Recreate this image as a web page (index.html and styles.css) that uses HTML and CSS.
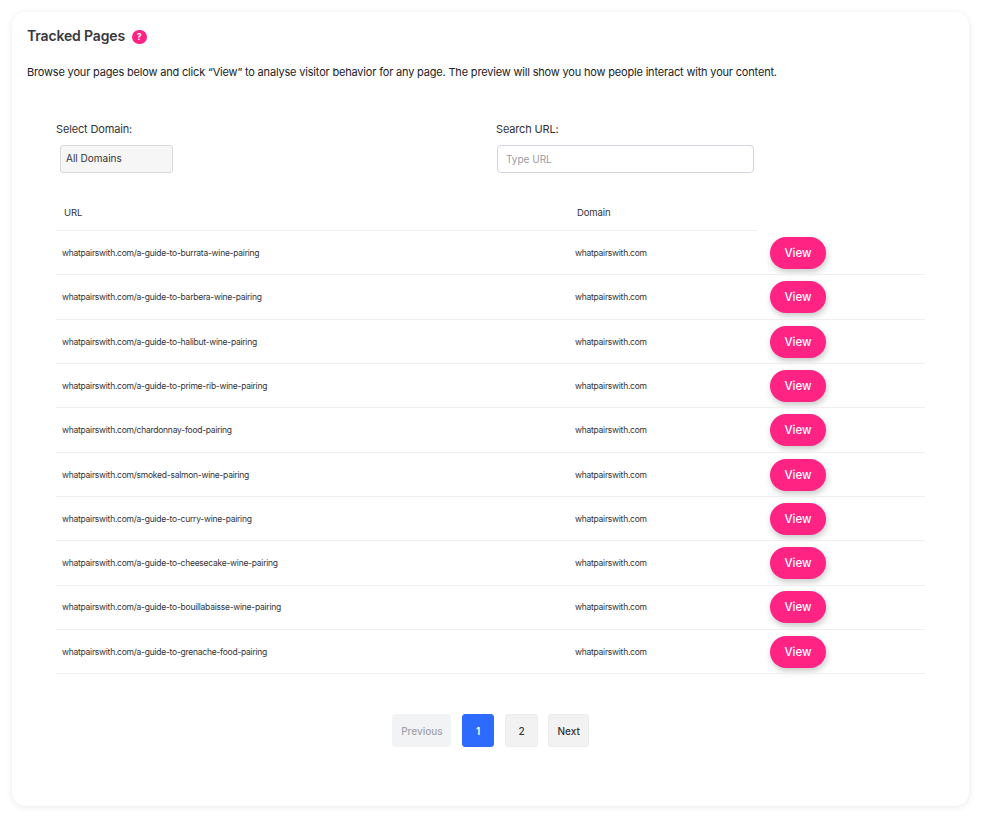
FILE: index.html
```html
<!DOCTYPE html>
<html lang="en">
<head>
<meta charset="utf-8">
<title>Tracked Pages</title>
<link rel="stylesheet" href="styles.css">
</head>
<body>
<main class="card">
  <div class="title-row">
    <h1 class="title">Tracked Pages</h1>
    <span class="help">?</span>
  </div>
  <p class="intro">Browse your pages below and click “View” to analyse visitor behavior for any page. The preview will show you how people interact with your content.</p>
  <section class="content">
    <div class="filters">
      <div class="filter filter-domain">
        <label class="label">Select Domain:</label>
        <div class="select">All Domains</div>
      </div>
      <div class="filter filter-search">
        <label class="label">Search URL:</label>
        <input class="search" type="text" placeholder="Type URL">
      </div>
    </div>
    <table class="pages">
      <thead>
        <tr><th class="col-url">URL</th><th class="col-domain">Domain</th><th class="col-action"></th></tr>
      </thead>
      <tbody>
        <tr><td class="col-url">whatpairswith.com/a-guide-to-burrata-wine-pairing</td><td class="col-domain">whatpairswith.com</td><td class="col-action"><button class="view">View</button></td></tr>
        <tr><td class="col-url">whatpairswith.com/a-guide-to-barbera-wine-pairing</td><td class="col-domain">whatpairswith.com</td><td class="col-action"><button class="view">View</button></td></tr>
        <tr><td class="col-url">whatpairswith.com/a-guide-to-halibut-wine-pairing</td><td class="col-domain">whatpairswith.com</td><td class="col-action"><button class="view">View</button></td></tr>
        <tr><td class="col-url">whatpairswith.com/a-guide-to-prime-rib-wine-pairing</td><td class="col-domain">whatpairswith.com</td><td class="col-action"><button class="view">View</button></td></tr>
        <tr><td class="col-url">whatpairswith.com/chardonnay-food-pairing</td><td class="col-domain">whatpairswith.com</td><td class="col-action"><button class="view">View</button></td></tr>
        <tr><td class="col-url">whatpairswith.com/smoked-salmon-wine-pairing</td><td class="col-domain">whatpairswith.com</td><td class="col-action"><button class="view">View</button></td></tr>
        <tr><td class="col-url">whatpairswith.com/a-guide-to-curry-wine-pairing</td><td class="col-domain">whatpairswith.com</td><td class="col-action"><button class="view">View</button></td></tr>
        <tr><td class="col-url">whatpairswith.com/a-guide-to-cheesecake-wine-pairing</td><td class="col-domain">whatpairswith.com</td><td class="col-action"><button class="view">View</button></td></tr>
        <tr><td class="col-url">whatpairswith.com/a-guide-to-bouillabaisse-wine-pairing</td><td class="col-domain">whatpairswith.com</td><td class="col-action"><button class="view">View</button></td></tr>
        <tr><td class="col-url">whatpairswith.com/a-guide-to-grenache-food-pairing</td><td class="col-domain">whatpairswith.com</td><td class="col-action"><button class="view">View</button></td></tr>
      </tbody>
    </table>
    <nav class="pager">
      <span class="page page-prev">Previous</span>
      <span class="page page-num page-current">1</span>
      <span class="page page-num">2</span>
      <span class="page page-next">Next</span>
    </nav>
  </section>
</main>
</body>
</html>
```
FILE: styles.css
```css
* { box-sizing: border-box; }
html, body { height: 100%; }
body {
  margin: 0;
  padding: 12px 31px 10px 12px;
  background: #fff;
  font-family: Inter, "Liberation Sans", sans-serif;
  color: #2b2b2f;
}
.card {
  height: 794px;
  padding: 14px 14px 0 15px;
  background: #fff;
  border-radius: 14px;
  box-shadow: 0 1px 7px rgba(0, 0, 0, 0.09);
}
.title-row {
  display: flex;
  align-items: center;
  gap: 7px;
  height: 20px;
}
.title {
  margin: -1px 0 0;
  font-size: 14px;
  line-height: 20px;
  font-weight: 600;
  letter-spacing: -0.15px;
  color: #38383d;
}
.help {
  display: flex;
  align-items: center;
  justify-content: center;
  width: 14.5px;
  height: 14.5px;
  margin-top: 2px;
  border-radius: 50%;
  background: #ff2483;
  color: #fff;
  font-size: 8.5px;
  font-weight: 700;
}
.intro {
  margin: 17px 0 0;
  font-size: 11px;
  line-height: 18px;
  letter-spacing: -0.18px;
  color: #222226;
}
.content { padding: 0 29px; }
.filters {
  display: flex;
  margin-top: 40px;
}
.filter { display: flex; flex-direction: column; }
.filter-domain { width: 440px; }
.label {
  font-size: 11px;
  line-height: 16px;
  letter-spacing: -0.15px;
  color: #333338;
}
.select {
  width: 113px;
  height: 28px;
  margin: 8px 0 0 4px;
  padding-left: 5px;
  font-size: 10px;
  line-height: 25px;
  color: #333338;
  background: #f6f6f6;
  border: 1px solid #d9d9de;
  border-radius: 3px;
}
.search {
  width: 257px;
  height: 28px;
  margin: 8px 0 0 1px;
  padding: 0 8px;
  font-family: inherit;
  font-size: 10px;
  background: #fff;
  border: 1px solid #d4d4de;
  border-radius: 4px;
}
.search::placeholder { color: #9b9ba3; opacity: 1; }
.pages {
  width: 869px;
  margin-top: 18px;
  border-collapse: collapse;
  table-layout: fixed;
}
.pages th {
  height: 39.7px;
  padding: 3px 0 0;
  font-size: 9.5px;
  font-weight: 400;
  letter-spacing: -0.1px;
  text-align: left;
  color: #333338;
  border-bottom: 1px solid #eeeeee;
}
.pages th.col-url { padding-left: 8px; }
.pages th.col-domain { padding-left: 8px; }
.pages th.col-action { border-bottom: 0; }
.pages td {
  height: 44.3px;
  padding: 0.5px 0 0;
  font-size: 8.5px;
  letter-spacing: -0.25px;
  color: #333338;
  border-bottom: 1px solid #eeeeee;
}
.pages td.col-url { padding-left: 6px; }
.pages td.col-domain { padding-left: 6px; }
.col-url { width: 513px; }
.col-domain { width: 188px; }
.pages .col-action { padding-left: 13px; }
.view {
  display: block;
  width: 56px;
  height: 32px;
  padding: 0;
  font-family: inherit;
  font-size: 11.5px;
  font-weight: 500;
  color: #fff;
  background: #ff2483;
  border: 0;
  border-radius: 16px;
  box-shadow: 1px 3px 6px rgba(0, 0, 0, 0.22);
}
.pager {
  display: flex;
  justify-content: center;
  gap: 10.4px;
  margin-top: 40px;
  padding-right: 0.4px;
}
.page {
  display: flex;
  align-items: center;
  justify-content: center;
  height: 33px;
  font-size: 10px;
  font-weight: 500;
  background: #f2f2f2;
  border: 1px solid #ececec;
  border-radius: 3px;
  color: #333338;
}
.page-prev { width: 59px; color: #a0a3a9; background: #f2f3f5; border-color: #f2f3f5; }
.page-num { width: 32.5px; }
.page-num + .page-num { margin-left: 0.6px; }
.page-next { width: 41px; }
.page-current { background: #2d6bff; border-color: #2d6bff; color: #fff; font-weight: 600; }
```
